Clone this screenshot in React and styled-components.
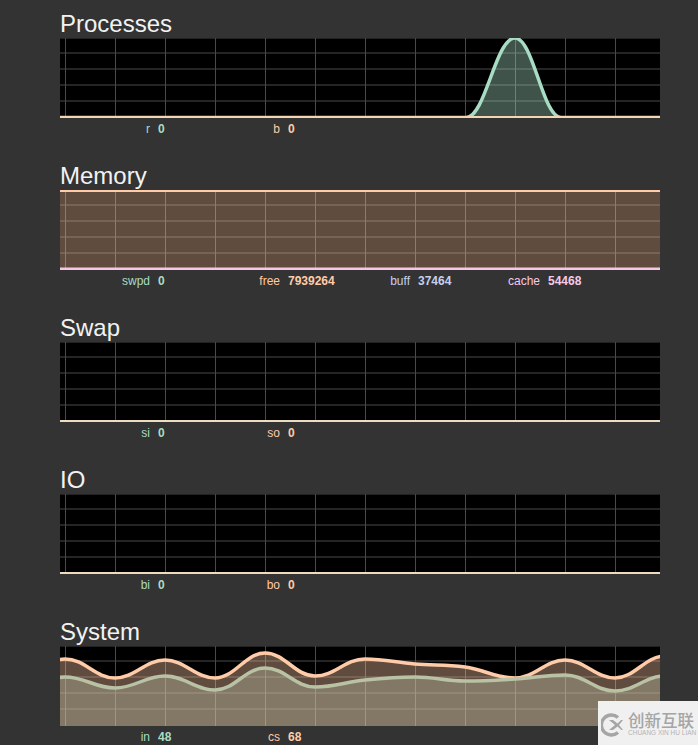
import React from 'react'
import styled, { createGlobalStyle } from 'styled-components'

const MINT = '#a8dcc4'
const PEACH = '#ffcba8'
const LILAC = '#c4d0f0'
const PINK = '#f6c8e8'
const SAGE = '#b9c2a4'
const BLEND = '#ecdcc0'

const COLS = [5, 55, 105, 155, 205, 255, 305, 355, 405, 455, 505, 555]
const ROWS = [15, 31, 47, 63]

const peak = [[406, 79.5], [455, 0], [501, 79.5]]
const line = (y) => [[-5, y], [605, y]]
const wave = (ys) => ys.map((y, i) => [-45 + i * 50, y])

const charts = [
  {
    title: 'Processes',
    series: [
      { color: MINT, points: [[-5, 79.5], ...peak, [605, 79.5]] },
      { color: '#f3d7b5', points: line(79), flat: true, width: 2 },
    ],
    legend: [['r', '0', MINT], ['b', '0', PEACH]],
  },
  {
    title: 'Memory',
    series: [
      { color: PEACH, points: line(0.5), width: 3 },
      { color: PINK, points: line(79), flat: true, width: 3 },
    ],
    legend: [['swpd', '0', MINT], ['free', '7939264', PEACH], ['buff', '37464', LILAC], ['cache', '54468', PINK]],
  },
  {
    title: 'Swap',
    series: [{ color: BLEND, points: line(79), flat: true, width: 2 }],
    legend: [['si', '0', MINT], ['so', '0', PEACH]],
  },
  {
    title: 'IO',
    series: [{ color: BLEND, points: line(79), flat: true, width: 2 }],
    legend: [['bi', '0', MINT], ['bo', '0', PEACH]],
  },
  {
    title: 'System',
    series: [
      { color: PEACH, points: wave([32, 13, 32, 14, 32, 7, 30, 13, 18, 21, 32, 14, 32, 10]) },
      { color: SAGE, points: wave([44, 31, 42, 30, 44, 22, 41, 34, 31, 35, 33, 29, 45, 30]) },
    ],
    legend: [['in', '48', MINT], ['cs', '68', PEACH]],
  },
]

// monotone curve: flat at the peaks, average slope elsewhere
const toPath = (pts) => {
  const slope = (a, b) => (b[1] - a[1]) / (b[0] - a[0])
  const tangent = pts.map((p, i) => {
    if (i === 0 || i === pts.length - 1) return 0
    const s0 = slope(pts[i - 1], p)
    const s1 = slope(p, pts[i + 1])
    return s0 * s1 <= 0 ? 0 : (s0 + s1) / 2
  })
  let d = `M${pts[0][0]},${pts[0][1]}`
  for (let i = 1; i < pts.length; i++) {
    const dx = (pts[i][0] - pts[i - 1][0]) / 2.5
    d += ` C${pts[i - 1][0] + dx},${pts[i - 1][1] + tangent[i - 1] * dx} ${pts[i][0] - dx},${pts[i][1] - tangent[i] * dx} ${pts[i][0]},${pts[i][1]}`
  }
  return d
}

const GlobalStyle = createGlobalStyle`
  html, body {
    margin: 0;
    height: 100%;
    overflow: hidden;
    background: #333333;
  }
`

const Page = styled.div`
  padding: 12px 0 0 60px;
  font-family: "Liberation Sans", Arial, sans-serif;
`

const Section = styled.section`
  width: 600px;
  height: 152px;
`

const Title = styled.h2`
  margin: 0;
  height: 26px;
  font-size: 24px;
  font-weight: 400;
  line-height: 24px;
  color: #f2f2f2;
`

const ChartSvg = styled.svg`
  display: block;
  width: 600px;
  height: 80px;
  background: #000;
`

const Legend = styled.div`
  display: flex;
  padding-top: 4px;
  font-size: 12px;
  line-height: 14px;
`

const Item = styled.div`
  display: grid;
  grid-template-columns: 90px 40px;
  column-gap: 8px;
  width: 130px;
  color: ${(props) => props.color};
`

const Label = styled.span`
  text-align: right;
`

const Value = styled.b`
  font-weight: 700;
  white-space: nowrap;
`

const Watermark = styled.div`
  position: fixed;
  right: 0;
  bottom: 0;
  width: 100px;
  height: 44px;
  background: #f0f0f0;
  display: flex;
  align-items: center;
  gap: 5px;
  padding: 3px 0 0 3px;
  box-sizing: border-box;
  color: #a5a5a5;
`

const MarkText = styled.div`
  display: flex;
  flex-direction: column;
`

const MarkName = styled.span`
  font-family: "Noto Sans CJK SC", sans-serif;
  font-size: 16.5px;
  font-weight: 500;
  line-height: 17px;
  white-space: nowrap;
`

const MarkSub = styled.span`
  font-family: "Liberation Sans", Arial, sans-serif;
  font-size: 6.5px;
  line-height: 8px;
  white-space: nowrap;
  color: #b4b4b4;
`

const Chart = ({ series }) => (
  <ChartSvg viewBox="0 0 600 80">
    <line x1="0" y1="0.5" x2="600" y2="0.5" stroke="#222" />
    {COLS.map((x) => (
      <line key={x} x1={x + 0.5} y1="0" x2={x + 0.5} y2="80" stroke="#4a4a4a" />
    ))}
    {ROWS.map((y) => (
      <line key={y} x1="0" y1={y} x2="600" y2={y} stroke="#4a4a4a" />
    ))}
    {series.map((s, i) => {
      const d = toPath(s.points)
      const last = s.points[s.points.length - 1][0]
      const first = s.points[0][0]
      return (
        <g key={i}>
          {!s.flat && <path d={`${d} L${last},80 L${first},80 Z`} fill={s.color} fillOpacity="0.375" />}
          <path d={d} fill="none" stroke={s.color} strokeWidth={s.width || 3.5} />
        </g>
      )
    })}
  </ChartSvg>
)

const App = () => (
  <>
    <GlobalStyle />
    <Page>
      {charts.map((c) => (
        <Section key={c.title}>
          <Title>{c.title}</Title>
          <Chart series={c.series} />
          <Legend>
            {c.legend.map(([label, value, color]) => (
              <Item key={label} color={color}>
                <Label>{label}</Label>
                <Value>{value}</Value>
              </Item>
            ))}
          </Legend>
        </Section>
      ))}
    </Page>
    <Watermark>
      <svg width="22" height="26" viewBox="0 0 22 26">
        <path d="M17 5.5 A10 10 0 1 0 17 20.5" fill="none" stroke="#a5a5a5" strokeWidth="3.4" />
        <path d="M8 8 L14 13 L8 18 L12 18 L16.5 14.5 L20.5 18 L22 18 L18 13 L22 8 L20 8 L16.5 11.5 L12 8 Z" fill="#a5a5a5" />
      </svg>
      <MarkText>
        <MarkName>创新互联</MarkName>
        <MarkSub>CHUANG XIN HU LIAN</MarkSub>
      </MarkText>
    </Watermark>
  </>
)

export default App
